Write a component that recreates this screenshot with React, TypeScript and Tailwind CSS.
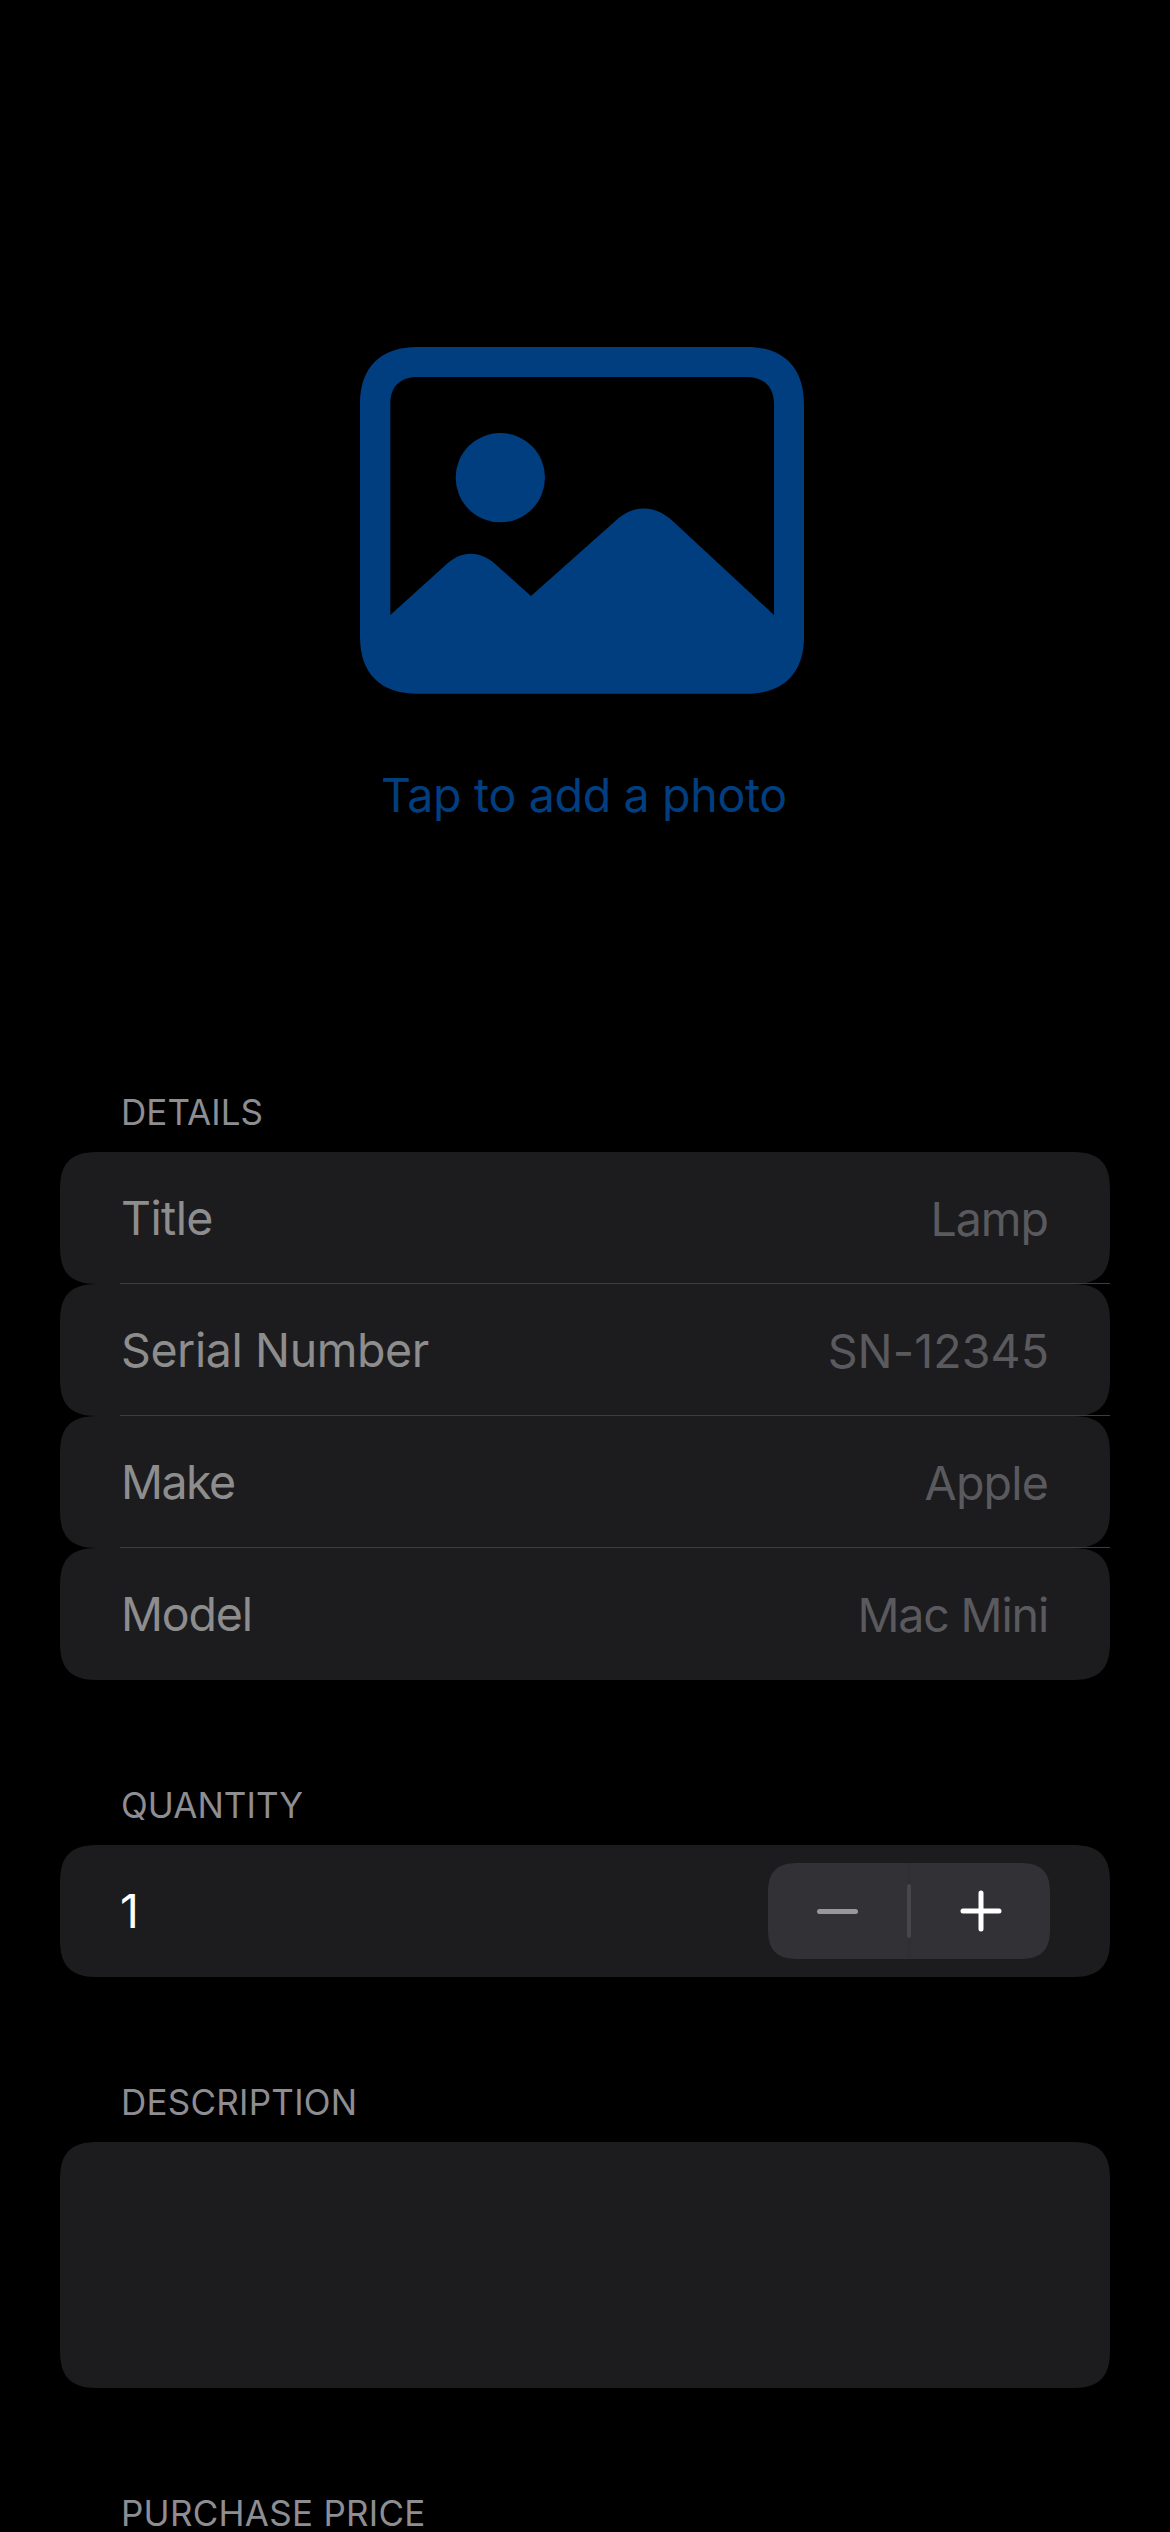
import type { ReactNode } from "react";

const CARD =
  "bg-[#1c1c1e] rounded-[30px] supports-[corner-shape:squircle]:rounded-[40px] [corner-shape:superellipse(1.48)]";

const HEADER = "h-[36px] pl-[61px] text-[35px] leading-[36px] whitespace-nowrap text-[#8d8d92]";

function SectionHeader({ children, tracking }: { children: ReactNode; tracking: string }) {
  return <h2 className={`${HEADER} ${tracking}`}>{children}</h2>;
}

function PhotoIcon() {
  return (
    <svg className="h-[347px] w-[444px]" viewBox="60 51 1332 1041" fill="#003e80">
      <path
        fillRule="evenodd"
        d="M232 51H1220C1330 51 1392 112 1392 222V920C1392 1030 1330 1091 1220 1091H232C122 1091 60 1030 60 920V222C60 112 122 51 232 51ZM232 141C180 141 151 170 151 222V855L316 706C364 661 418 660 468 704L573 798L826 573C880 523 943 524 998 573L1302 855V222C1302 170 1272 141 1220 141Z"
      />
      <circle cx="481" cy="443" r="134" />
    </svg>
  );
}

type Field = { label: string; labelTracking: string; value: string; valueTracking: string };

const FIELDS: Field[] = [
  { label: "Title", labelTracking: "tracking-[-0.6px]", value: "Lamp", valueTracking: "tracking-[-1px] mr-[2px]" },
  { label: "Serial Number", labelTracking: "tracking-[-0.41px]", value: "SN-12345", valueTracking: "tracking-[0.1px] mr-[1px]" },
  { label: "Make", labelTracking: "tracking-[-1.5px]", value: "Apple", valueTracking: "tracking-[-0.8px] mr-[2px]" },
  { label: "Model", labelTracking: "tracking-[-1.2px]", value: "Mac Mini", valueTracking: "tracking-[-1.15px] mr-[2px]" },
];

function FieldRow({ field, last }: { field: Field; last: boolean }) {
  return (
    <div className={`relative flex h-[132px] items-center justify-between pr-[60px] pl-[61px] ${CARD}`}>
      <span className={`text-[#8d8d8e] ${field.labelTracking}`}>{field.label}</span>
      <span className={`relative top-px text-[#5a5a5e] ${field.valueTracking}`}>{field.value}</span>
      {!last && <div className="absolute right-0 bottom-0 left-[60px] h-px bg-[#3d3d41]" />}
    </div>
  );
}

function Stepper() {
  return (
    <div className="flex h-[96px] w-[282px] items-center rounded-[24px] bg-[#323236] [corner-shape:superellipse(1.48)] supports-[corner-shape:squircle]:rounded-[32px]">
      <button className="flex h-full w-[139px] items-center justify-center" aria-label="Decrement">
        <span className="h-[5px] w-[41px] rounded-full bg-[#98989a]" />
      </button>
      <div className="flex h-full items-center bg-[#303034]">
        <div className="h-[54px] w-[4px] rounded-full bg-[#47474b]" />
      </div>
      <button className="flex h-full w-[139px] items-center justify-center" aria-label="Increment">
        <svg className="h-[42px] w-[42px]" viewBox="0 0 42 42" stroke="#fff" strokeWidth="5" strokeLinecap="round">
          <path d="M21 3V39M3 21H39" />
        </svg>
      </button>
    </div>
  );
}

export default function App() {
  return (
    <main className="flex h-[2532px] w-[1170px] flex-col overflow-hidden bg-black px-[60px] font-['Inter',sans-serif] text-[46.5px] leading-[60px]">
      <section className="flex h-[1094px] shrink-0 flex-col items-center pt-[347px] text-[#003e80]">
        <div className="mr-[6px]">
          <PhotoIcon />
        </div>
        <p className="mt-[71px] mr-[2px] tracking-[-0.33px] whitespace-nowrap">Tap to add a photo</p>
      </section>

      <section className="shrink-0">
        <SectionHeader tracking="tracking-[0.05px]">DETAILS</SectionHeader>
        <div className="mt-[22px]">
          {FIELDS.map((field, i) => (
            <FieldRow key={field.label} field={field} last={i === FIELDS.length - 1} />
          ))}
        </div>
      </section>

      <section className="mt-[107px] shrink-0">
        <SectionHeader tracking="tracking-[0.05px]">QUANTITY</SectionHeader>
        <div className={`mt-[22px] flex h-[132px] items-center justify-between px-[60px] text-white ${CARD}`}>
          <span>1</span>
          <Stepper />
        </div>
      </section>

      <section className="mt-[107px] shrink-0">
        <SectionHeader tracking="tracking-[0.25px]">DESCRIPTION</SectionHeader>
        <div className={`mt-[22px] h-[246px] ${CARD}`} />
      </section>

      <section className="mt-[107px] shrink-0">
        <SectionHeader tracking="tracking-[0.27px]">PURCHASE PRICE</SectionHeader>
      </section>
    </main>
  );
}
